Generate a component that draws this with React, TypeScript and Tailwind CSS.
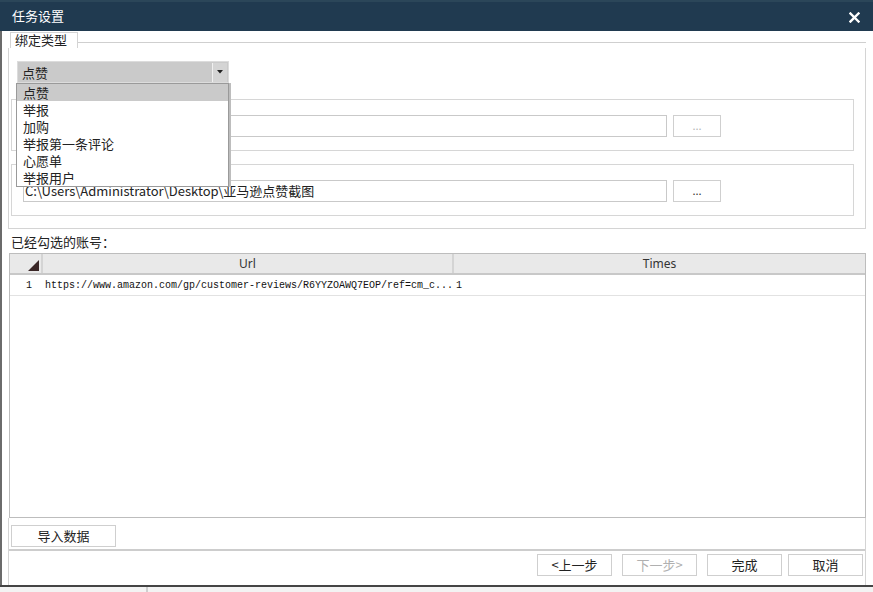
import React from "react";

const cn = '"Microsoft YaHei", "Noto Sans CJK SC", "Noto Sans", sans-serif';

const options = ["点赞", "举报", "加购", "举报第一条评论", "心愿单", "举报用户"];

const GroupBox = ({ value, dim }: { value?: string; dim?: boolean }) => {
  return (
    <div className="ml-[2px] w-[843px] h-[52px] border border-[#d6d6d6] shadow-[inset_1px_1px_0_#fff,1px_1px_0_#fff] flex items-start pt-[15px] pl-[11px]">
      <div className="w-[644px] h-[22px] border border-[#c9c9c9] bg-white text-[13px] leading-[20px] pl-[1px] text-[#222] overflow-hidden whitespace-nowrap">
        {value}
      </div>
      <div
        className={
          "ml-[6px] w-[48px] h-[22px] border border-[#cfcfcf] bg-white flex items-center justify-center text-[11px] leading-none pb-[2px] " +
          (dim ? "text-[#b5b5b5]" : "text-[#333]")
        }
      >
        ...
      </div>
    </div>
  );
};

const Btn = ({ children, w, dim }: { children: React.ReactNode; w: string; dim?: boolean }) => {
  return (
    <div
      className={
        w +
        " h-[22px] border border-[#cfcfcf] bg-white flex items-center justify-center text-[13px] " +
        (dim ? "text-[#b0b0b0]" : "text-[#222]")
      }
    >
      {children}
    </div>
  );
};

export default function App() {
  return (
    <div className="w-[873px] h-[592px] bg-white flex flex-col overflow-hidden" style={{ fontFamily: cn }}>
      {/* 标题栏 */}
      <div className="h-[31px] bg-[#203a50] border-t-2 border-[#2b4659] flex items-center justify-between pl-[12px] pr-[13px]">
        <span className="text-white text-[13px] leading-none pb-[3px]">任务设置</span>
        <svg width="11" height="11" viewBox="0 0 11 11" className="mt-[2px]">
          <path d="M1.5 1.5 L9.5 9.5 M9.5 1.5 L1.5 9.5" stroke="#fff" strokeWidth="2.4" strokeLinecap="square" />
        </svg>
      </div>

      <div className="flex-1 flex flex-col border-l-2 border-[#6b6b6b] pl-[6px] pr-[7px]">
        {/* 绑定类型 */}
        <div className="relative">
          <div className="flex items-end h-[16px] mt-[1px]">
            <div className="ml-[2px] w-[68px] h-[16px] border border-b-0 border-[#d4d4d4] text-[13px] leading-[14px] pl-[4px] text-[#222] bg-white">
              绑定类型
            </div>
            <div className="flex-1 h-[6px] border-t border-[#cfcfcf]" />
          </div>
          <div className="h-[181px] border-l border-r border-b border-[#d4d4d4] flex flex-col">
            <div className="mt-[13px] ml-[8px] w-[212px] h-[22px] bg-[#cacaca] border border-[#dcdcdc] flex items-center">
              <span className="flex-1 text-[13px] pl-[4px] text-[#222] leading-none">点赞</span>
              <div className="w-[15px] h-[19px] mr-[1px] bg-[#d4d4d4] border-l border-[#f0f0f0] flex items-center justify-center">
                <svg width="6" height="4" viewBox="0 0 6 4">
                  <path d="M0 0 H6 L3 3.5 Z" fill="#222" />
                </svg>
              </div>
            </div>
            <div className="mt-[16px]">
              <GroupBox dim />
            </div>
            <div className="mt-[13px]">
              <GroupBox value="C:\Users\Administrator\Desktop\亚马逊点赞截图" />
            </div>
          </div>

          {/* 下拉列表 */}
          <div className="absolute left-[8px] top-[52px] w-[213px] bg-white border border-[#9a9a9a] shadow-[2px_0_0_#bdbdbd]">
            {options.map((o, i) => (
              <div
                key={o}
                className={
                  "h-[17px] text-[13px] leading-[17px] pl-[6px] text-[#222] " + (i === 0 ? "bg-[#cacaca]" : "")
                }
              >
                {o}
              </div>
            ))}
          </div>
        </div>

        <div className="mt-[4px] ml-[3px] text-[13px] leading-[18px] text-[#222]">已经勾选的账号：</div>

        {/* 表格 */}
        <div className="mt-[2px] ml-[1px] h-[265px] border border-[#bdbdbd] flex flex-col">
          <div className="h-[21px] bg-[#e9e9e9] border-b-2 border-[#c8c8c8] flex text-[12px] text-[#333]" style={{ fontFamily: '"Segoe UI", "Noto Sans", sans-serif' }}>
            <div className="w-[33px] border-r-2 border-[#d4d4d4] flex items-end justify-end pr-[2px] pb-[2px]">
              <svg width="11" height="11" viewBox="0 0 11 11">
                <path d="M11 0 V11 H0 Z" fill="#3a2626" />
              </svg>
            </div>
            <div className="w-[411px] border-r-2 border-[#d4d4d4] flex items-center justify-center leading-none">Url</div>
            <div className="flex-1 flex items-center justify-center leading-none">Times</div>
          </div>
          <div className="h-[21px] border-b border-[#e2e2e2] flex items-center text-[10px] text-[#111]" style={{ fontFamily: '"Liberation Mono", monospace' }}>
            <div className="w-[33px] text-center pl-[5px]">1</div>
            <div className="w-[411px] pl-[2px] whitespace-nowrap">
              https://www.amazon.com/gp/customer-reviews/R6YYZOAWQ7EOP/ref=cm_c...
            </div>
            <div className="flex-1 pl-[2px]">1</div>
          </div>
        </div>

        {/* 底部 */}
        <div className="flex-1 flex flex-col border-l border-r border-[#d4d4d4]">
          <div className="h-[33px] border-b-2 border-[#cdcdcd] flex items-start pt-[7px] pl-[2px]">
            <Btn w="w-[105px]">导入数据</Btn>
          </div>
          <div className="flex-1 flex justify-end items-start pt-[3px] pr-[2px] gap-[10px]">
            <Btn w="w-[75px]">&lt;上一步</Btn>
            <Btn w="w-[75px]" dim>下一步&gt;</Btn>
            <div className="flex gap-[6px]">
              <Btn w="w-[75px]">完成</Btn>
              <Btn w="w-[75px]">取消</Btn>
            </div>
          </div>
        </div>
      </div>

      <div className="h-[7px] border-t-2 border-[#444] bg-[#f3f3f3] flex">
        <div className="ml-[146px] w-[2px] border-l border-r border-[#cfcfcf]" />
      </div>
    </div>
  );
}
